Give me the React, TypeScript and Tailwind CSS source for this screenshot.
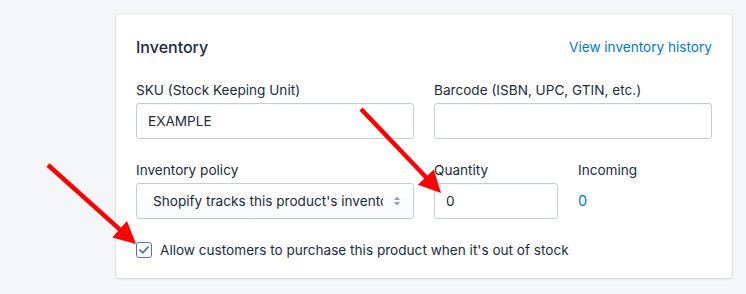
import React from 'react';

type Pt = [number, number];

// red annotation arrow, head drawn as a triangle at the tip
const Arrow: React.FC<{ from: Pt; to: Pt }> = ({ from, to }) => {
  const dx = to[0] - from[0];
  const dy = to[1] - from[1];
  const len = Math.hypot(dx, dy);
  const ux = dx / len;
  const uy = dy / len;
  const headLen = 22;
  const half = 11;
  const bx = to[0] - ux * headLen;
  const by = to[1] - uy * headLen;
  const pts = [
    `${to[0]},${to[1]}`,
    `${bx - uy * half},${by + ux * half}`,
    `${bx + uy * half},${by - ux * half}`,
  ].join(' ');
  return (
    <g>
      <line x1={from[0]} y1={from[1]} x2={bx + ux * 2} y2={by + uy * 2} stroke="#ff0000" strokeWidth={4.5} />
      <polygon points={pts} fill="#ff0000" />
    </g>
  );
};

const Label: React.FC<{ children: React.ReactNode }> = ({ children }) => (
  <div className="mb-[3px] text-[13.6px] leading-5 text-[#212b36]">{children}</div>
);

const inputCls =
  'h-9 rounded-[3px] border border-[#c4cdd5] bg-white px-[11px] text-[13.6px] leading-[34px] text-[#212b36] shadow-[inset_0_1px_0_0_rgba(99,115,129,0.05)]';

const App: React.FC = () => {
  return (
    <div
      className="relative h-[294px] w-[746px] overflow-hidden bg-[#f4f6f8] pl-[116px] pt-[14px]"
      style={{ fontFamily: 'Inter, "Liberation Sans", sans-serif' }}
    >
      <div className="w-[616px] rounded-[3px] bg-white px-5 pb-[18px] pt-[21px] shadow-[0_0_0_1px_rgba(63,63,68,0.05),0_1px_3px_0_rgba(63,63,68,0.15)]">
        <div className="flex items-center justify-between">
          <h2 className="text-[16px] font-medium leading-6 text-[#212b36]">Inventory</h2>
          <a className="text-[13.6px] leading-5 text-[#007ace]">View inventory history</a>
        </div>

        <div className="mt-[21px] grid grid-cols-2 gap-5">
          <div>
            <Label>SKU (Stock Keeping Unit)</Label>
            <div className={inputCls}>EXAMPLE</div>
          </div>
          <div>
            <Label>Barcode (ISBN, UPC, GTIN, etc.)</Label>
            <div className={inputCls}></div>
          </div>
        </div>

        <div className="mt-[21px] grid grid-cols-2 gap-5">
          <div>
            <Label>Inventory policy</Label>
            <div className="flex h-9 items-center rounded-[3px] border border-[#c4cdd5] bg-gradient-to-b from-white to-[#f9fafb] pl-4 pr-3 shadow-[0_1px_0_0_rgba(22,29,37,0.05)]">
              <span className="flex-1 overflow-hidden whitespace-nowrap text-[13.6px] text-[#212b36]">
                Shopify tracks this product's inventory
              </span>
              <svg width="8" height="12" viewBox="0 0 8 12" className="ml-[10px] shrink-0">
                <path d="M4 1.5 L7 5 H1 Z" fill="#919eab" />
                <path d="M4 10.5 L7 7 H1 Z" fill="#919eab" />
              </svg>
            </div>
          </div>
          <div className="flex gap-5">
            <div className="w-[124px]">
              <Label>Quantity</Label>
              <div className={inputCls}>0</div>
            </div>
            <div>
              <Label>Incoming</Label>
              <div className="text-[14.5px] leading-9 text-[#007ace]">0</div>
            </div>
          </div>
        </div>

        <label className="mt-[21px] flex items-center gap-[8px]">
          <span className="flex h-4 w-4 items-center justify-center rounded-[3px] border border-[#5c6ac4] bg-white">
            <svg width="10" height="8" viewBox="0 0 10 8">
              <path d="M1 4.2 L3.8 6.8 L9 1.2" fill="none" stroke="#5c6ac4" strokeWidth="1.7" strokeLinecap="round" strokeLinejoin="round" />
            </svg>
          </span>
          <span className="text-[13.6px] leading-5 text-[#212b36]">
            Allow customers to purchase this product when it's out of stock
          </span>
        </label>
      </div>

      <svg className="pointer-events-none absolute inset-0" width="746" height="294">
        <Arrow from={[48, 165]} to={[136, 244]} />
        <Arrow from={[361, 109]} to={[441, 193]} />
      </svg>
    </div>
  );
};

export default App;
